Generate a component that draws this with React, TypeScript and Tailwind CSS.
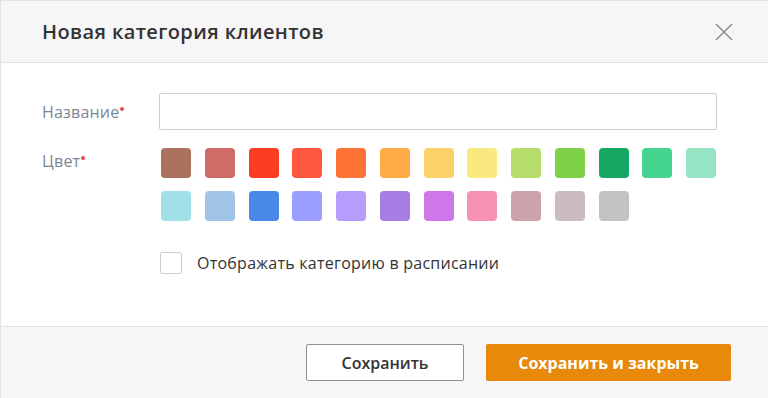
const ROW_ONE = [
  "#ab7260", "#d06b66", "#f93c22", "#fe5842", "#ff7436", "#ffab46", "#fbd26a",
  "#fae881", "#b6dc6b", "#80d14a", "#17a866", "#43d48f", "#95e4c4",
];

const ROW_TWO = [
  "#a0e0e6", "#a0c5e7", "#4a88e8", "#9b9eff", "#b89cfd", "#a67de2", "#ce77e8",
  "#f591b2", "#cba4ab", "#cbbdbf", "#c3c3c3",
];

function Label({ text }: { text: string }) {
  return (
    <div className="w-[117px] shrink-0 text-[16px] tracking-[0.2px] text-[#7b8594]">
      {text}
      <span className="relative -top-[7px] ml-[1px] inline-block h-[4px] w-[4px] rounded-full bg-[#f0484e]" />
    </div>
  );
}

export default function App() {
  const colors = [...ROW_ONE, ...ROW_TWO];

  return (
    <div className="flex h-[398px] w-[768px] flex-col overflow-hidden border-l border-t border-[#e3e3e3] bg-white font-['Open_Sans',sans-serif] text-[#333]">
      {/* Header */}
      <header className="flex h-[62px] shrink-0 items-center justify-between border-b border-[#e3e3e3] bg-[#f6f6f6] pl-[41px] pr-[35px]">
        <h1 className="pt-[1px] text-[20px] font-semibold tracking-[0.4px] text-[#333]">Новая категория клиентов</h1>
        <button className="text-[#8c8c8c]">
          <svg width="18" height="18" viewBox="0 0 18 18" fill="none" stroke="currentColor" strokeWidth="1.5">
            <path d="M1 1L17 17M17 1L1 17" />
          </svg>
        </button>
      </header>

      {/* Body */}
      <main className="flex flex-1 flex-col pl-[41px] pr-[51px] pt-[30px]">
        <div className="flex items-center">
          <Label text="Название" />
          <input className="h-[37px] flex-1 rounded-[2px] border border-[#cccccc] px-3 outline-none" />
        </div>

        <div className="mt-[18px] flex">
          <div className="pt-[1px]">
            <Label text="Цвет" />
          </div>
          <div className="flex flex-1 flex-wrap gap-x-[13.75px] gap-y-[13px] pl-[2px]">
            {colors.map((c) => (
              <div key={c} className="h-[30px] w-[30px] rounded-[4px]" style={{ backgroundColor: c }} />
            ))}
          </div>
        </div>

        <label className="ml-[118px] mt-[30px] flex items-center gap-[15px]">
          <span className="h-[22px] w-[22px] rounded-[2px] border border-[#cccccc] bg-white" />
          <span className="text-[16px] tracking-[0.25px] text-[#333]">Отображать категорию в расписании</span>
        </label>
      </main>

      {/* Footer */}
      <footer className="flex h-[72px] shrink-0 items-center justify-end gap-[22px] border-t border-[#e3e3e3] bg-[#f6f6f6] pr-[37px]">
        <button className="h-[37px] w-[158px] rounded-[2px] border border-[#8f8f8f] bg-white text-[16px] font-semibold text-[#333]">
          Сохранить
        </button>
        <button className="h-[37px] w-[245px] rounded-[2px] bg-[#e8890c] text-[16px] font-bold text-white">
          Сохранить и закрыть
        </button>
      </footer>
    </div>
  );
}
